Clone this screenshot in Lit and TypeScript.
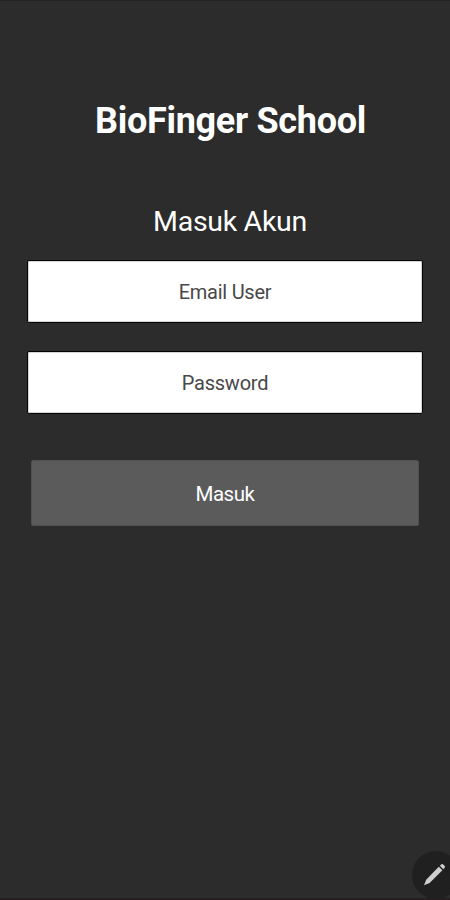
import { LitElement, html, css } from "lit";
import { customElement } from "lit/decorators.js";

@customElement("app-root")
export class AppRoot extends LitElement {
  static styles = css`
    :host { display: block; height: 900px; font-family: Roboto, sans-serif; }
    .screen { position: relative; box-sizing: border-box; height: 900px; overflow: hidden; background: #2c2c2c; border-top: 1px solid #222; border-bottom: 2px solid #251f22; display: flex; flex-direction: column; align-items: center; color: #fff; }
    h1 { margin: 98px 0 0; padding-left: 11px; font-size: 36px; line-height: 44px; font-weight: 700; letter-spacing: -0.3px; white-space: nowrap; }
    h2 { margin: 61px 0 0; padding-left: 10px; font-size: 28.5px; line-height: 36px; font-weight: 400; letter-spacing: -0.3px; white-space: nowrap; }
    .field { box-sizing: border-box; width: 396px; height: 63px; padding-top: 1px; border: 1px solid #050505; border-radius: 2px; box-shadow: inset 0 0 0 1px #d5d5d5; background: #fff; color: #484848; font-size: 20px; letter-spacing: -0.25px; display: flex; align-items: center; justify-content: center; }
    .email { margin-top: 20px; }
    .password { margin-top: 28px; }
    .submit { margin: 46px 0 0; width: 388px; height: 66px; padding: 2px 0 0; border: 1px solid #505051; border-radius: 2px; background: #5b5b5c; color: #fff; font: 400 20.5px Roboto, sans-serif; letter-spacing: -0.45px; }
    .edit { position: absolute; left: 412px; top: 850px; width: 48px; height: 48px; border-radius: 50%; background: #202020; }
    .edit svg { display: block; width: 48px; height: 48px; }
  `;

  render() {
    return html`<main class="screen">
      <h1>BioFinger School</h1>
      <h2>Masuk Akun</h2>
      <div class="field email">Email User</div>
      <div class="field password">Password</div>
      <button class="submit">Masuk</button>
      <div class="edit"><svg viewBox="0 0 48 48"><path d="M12 34.2L14.2 28.7L26.8 15.8L30.4 19.3L17.6 31.9ZM27.9 14.8l1.2-1.2q1.1-1 2.2 0l1.2 1.2q1 1.1 0 2.2L31.3 18.2z" fill="#cfcfcf"/></svg></div>
    </main>`;
  }
}
